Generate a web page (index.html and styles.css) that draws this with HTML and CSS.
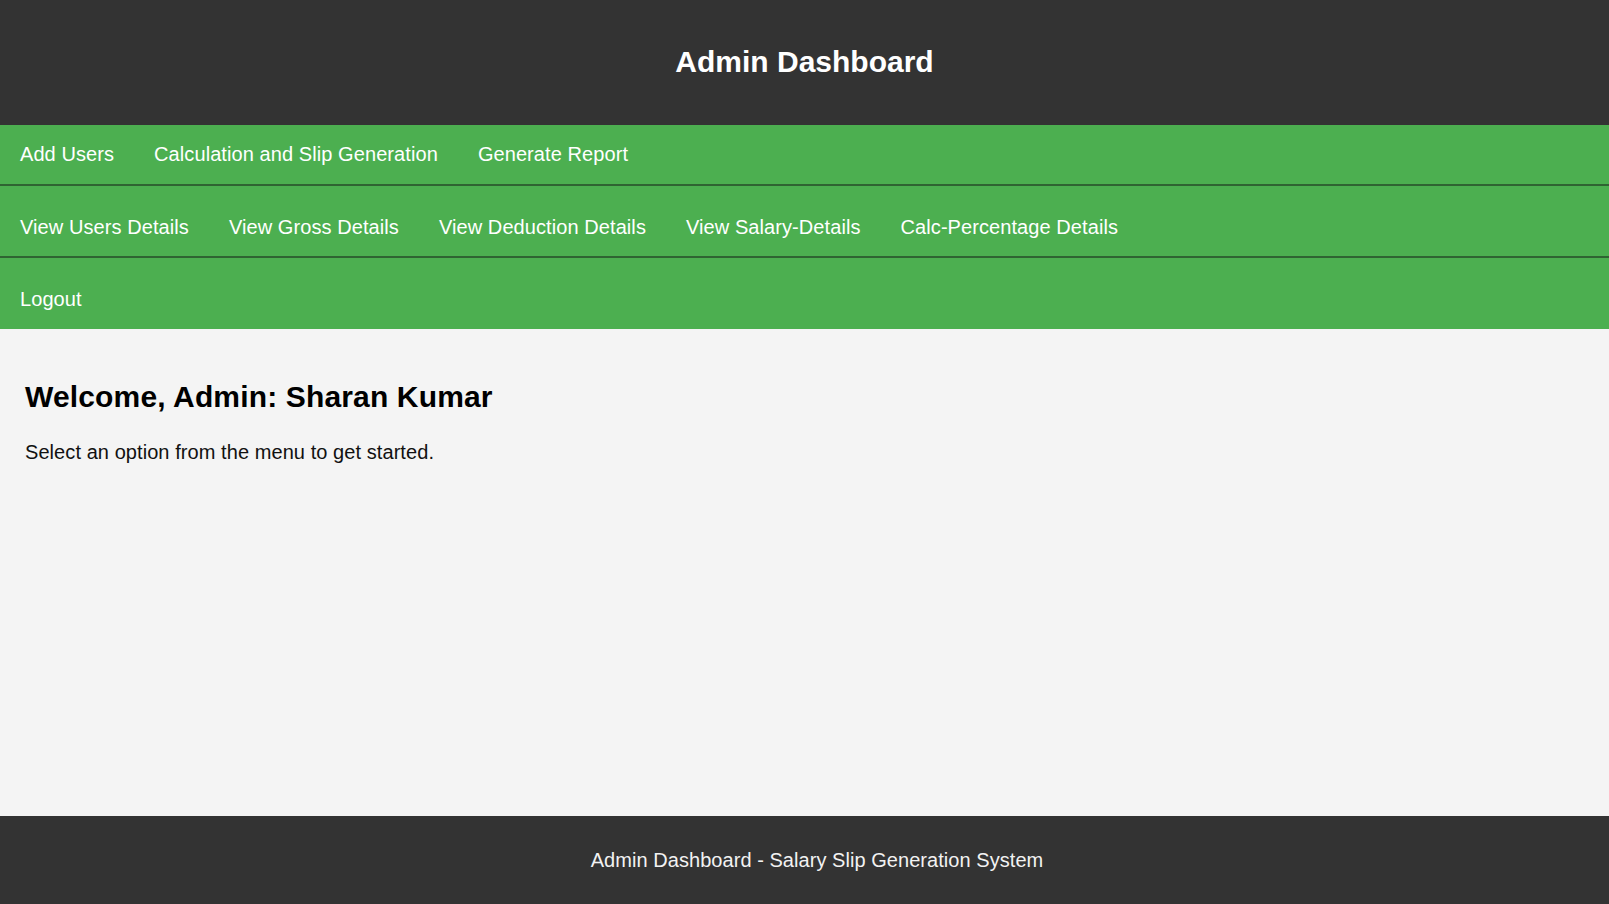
FILE: index.html
```html
<!DOCTYPE html>
<html lang="en">
<head>
<meta charset="utf-8">
<title>Admin Dashboard</title>
<link rel="stylesheet" href="styles.css">
</head>
<body>
<header class="site-header">
  <h1 class="site-title">Admin Dashboard</h1>
</header>
<nav class="menu">
  <div class="menu-row menu-row-first">
    <a class="menu-link" href="#">Add Users</a>
    <a class="menu-link" href="#">Calculation and Slip Generation</a>
    <a class="menu-link" href="#">Generate Report</a>
  </div>
  <div class="menu-row">
    <a class="menu-link" href="#">View Users Details</a>
    <a class="menu-link" href="#">View Gross Details</a>
    <a class="menu-link" href="#">View Deduction Details</a>
    <a class="menu-link" href="#">View Salary-Details</a>
    <a class="menu-link" href="#">Calc-Percentage Details</a>
  </div>
  <div class="menu-row menu-row-last">
    <a class="menu-link" href="#">Logout</a>
  </div>
</nav>
<main class="content">
  <h2 class="welcome">Welcome, Admin: Sharan Kumar</h2>
  <p class="intro">Select an option from the menu to get started.</p>
</main>
<footer class="site-footer">
  <p class="footer-text">Admin Dashboard - Salary Slip Generation System</p>
</footer>
</body>
</html>
```
FILE: styles.css
```css
html, body {
  margin: 0;
  padding: 0;
}
body {
  font-family: "Liberation Sans", Arial, sans-serif;
  background: #f4f4f4;
  color: #000;
  min-height: 100vh;
  display: flex;
  flex-direction: column;
}
.site-header {
  background: #333333;
  color: #ffffff;
  padding: 25px 0;
  text-align: center;
}
.site-title {
  margin: 19px 0 21px;
  font-size: 30px;
  line-height: 35px;
  font-weight: bold;
}
.menu {
  background: #4caf50;
}
.menu-row {
  display: flex;
  padding: 30px 0 17px;
  border-bottom: 2px solid #2f6432;
}
.menu-row-first {
  padding: 18px 0 18px;
}
.menu-row-last {
  padding: 30px 0 18px;
  border-bottom: none;
}
.menu-link {
  color: #ffffff;
  text-decoration: none;
  font-size: 20px;
  line-height: 23px;
  letter-spacing: 0.08px;
  padding: 0 20px;
}
.content {
  flex: 1;
  padding: 25px;
}
.welcome {
  margin: 25px 0 27px;
  font-size: 30px;
  line-height: 35px;
  font-weight: bold;
  letter-spacing: 0.15px;
  color: #000;
}
.intro {
  margin: 0;
  font-size: 20px;
  line-height: 23px;
  letter-spacing: 0.07px;
  color: #111;
}
.site-footer {
  background: #333333;
  color: #f2f2f2;
  text-align: center;
  padding: 33px 0 32px 25px;
}
.footer-text {
  margin: 0;
  font-size: 20px;
  line-height: 23px;
  letter-spacing: 0.05px;
}
```
